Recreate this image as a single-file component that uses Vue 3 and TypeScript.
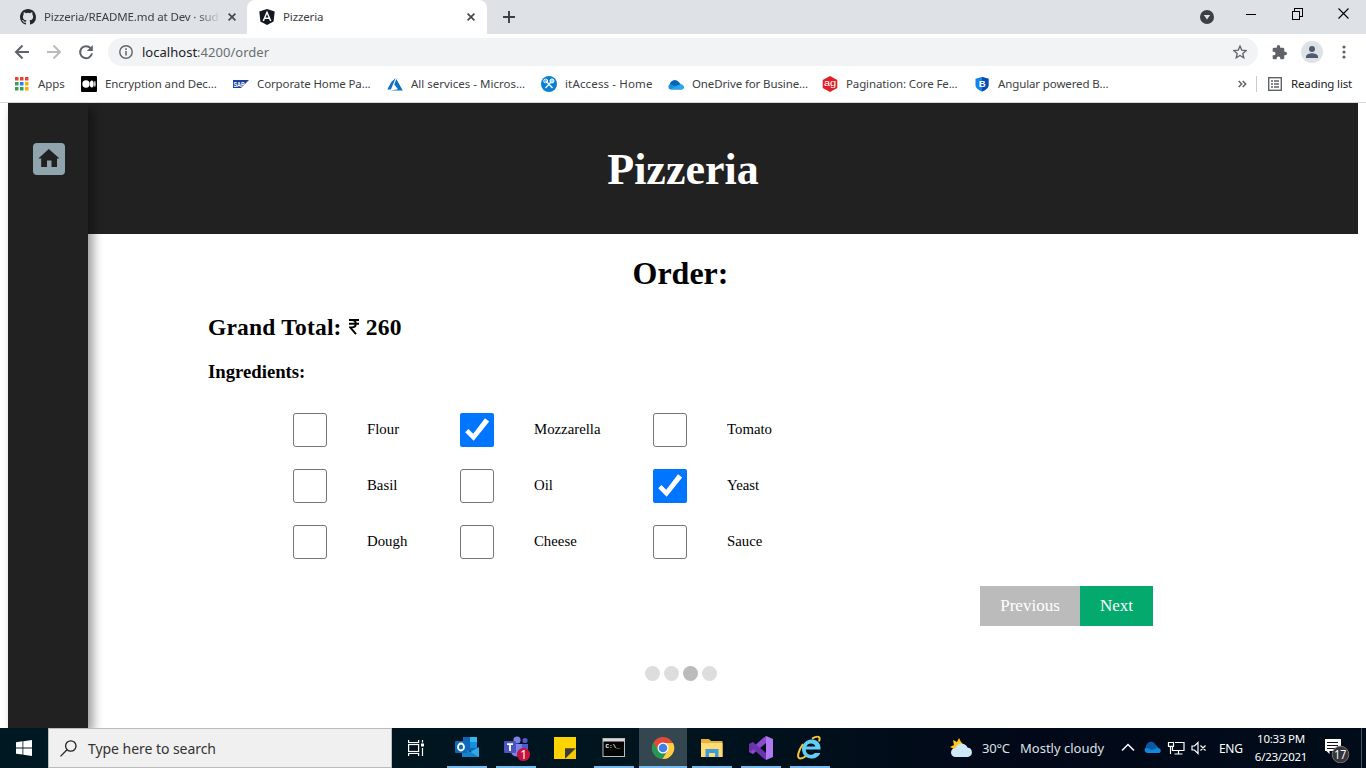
<script setup lang="ts">
import { ref } from 'vue'

interface Bookmark { id: string; label: string }
interface Ingredient { name: string; checked: boolean }

const bookmarks: Bookmark[] = [
  { id: 'medium', label: 'Encryption and Dec...' },
  { id: 'sap', label: 'Corporate Home Pa...' },
  { id: 'azure', label: 'All services - Micros...' },
  { id: 'it', label: 'itAccess - Home' },
  { id: 'onedrive', label: 'OneDrive for Busine...' },
  { id: 'ag', label: 'Pagination: Core Fe...' },
  { id: 'bootstrap', label: 'Angular powered B...' },
]

const ingredients = ref<Ingredient[]>([
  { name: 'Flour', checked: false },
  { name: 'Mozzarella', checked: true },
  { name: 'Tomato', checked: false },
  { name: 'Basil', checked: false },
  { name: 'Oil', checked: false },
  { name: 'Yeast', checked: true },
  { name: 'Dough', checked: false },
  { name: 'Cheese', checked: false },
  { name: 'Sauce', checked: false },
])

const steps = [1, 2, 3, 4]
const currentStep = 3
const total = 260
const tasks = ['outlook', 'teams', 'sticky', 'cmd', 'chrome', 'explorer', 'vs', 'ie']
</script>

<template>
  <div class="screen">
    <div class="tabstrip">
      <div class="tab tab-github">
        <svg class="fav" width="16" height="16" viewBox="0 0 16 16"><path fill="#24292e" d="M8 0C3.58 0 0 3.58 0 8c0 3.54 2.29 6.53 5.47 7.59.4.07.55-.17.55-.38 0-.19-.01-.82-.01-1.49-2.01.37-2.53-.49-2.69-.94-.09-.23-.48-.94-.82-1.13-.28-.15-.68-.52-.01-.53.63-.01 1.08.58 1.23.82.72 1.21 1.87.87 2.33.66.07-.52.28-.87.51-1.07-1.78-.2-3.64-.89-3.64-3.95 0-.87.31-1.59.82-2.15-.08-.2-.36-1.02.08-2.12 0 0 .67-.21 2.2.82a7.6 7.6 0 0 1 4 0c1.53-1.04 2.2-.82 2.2-.82.44 1.1.16 1.92.08 2.12.51.56.82 1.27.82 2.15 0 3.07-1.87 3.75-3.65 3.95.29.25.54.73.54 1.48 0 1.07-.01 1.93-.01 2.2 0 .21.15.46.55.38A8 8 0 0 0 16 8c0-4.42-3.58-8-8-8z"/></svg>
        <span class="tab-title faded">Pizzeria/README.md at Dev · sud</span>
        <svg class="x" width="8" height="8" viewBox="0 0 8 8"><path d="M.6.6l6.8 6.8M7.4.6L.6 7.4" stroke="#45494d" stroke-width="1.7"/></svg>
      </div>
      <div class="tab tab-active">
        <svg class="fav" width="16" height="16" viewBox="0 0 16 16"><path fill="#111820" d="M8 0l7.7 2.5-1.1 10L8 16l-6.600-3.500L.3 2.500z"/><path d="M4.300 12L8 3.300 11.700 12M5.700 9.300h4.600" fill="none" stroke="#fff" stroke-width="1.500"/></svg>
        <span class="tab-title">Pizzeria</span>
        <svg class="x" width="8" height="8" viewBox="0 0 8 8"><path d="M.6.6l6.8 6.8M7.4.6L.6 7.4" stroke="#45494d" stroke-width="1.7"/></svg>
      </div>
      <svg class="plus" width="12" height="12" viewBox="0 0 12 12"><path d="M6 0v12M0 6h12" stroke="#3c4043" stroke-width="1.9"/></svg>
      <svg class="drop" width="14" height="14" viewBox="0 0 14 14"><circle cx="7" cy="7" r="7" fill="#3c4043"/><path d="M3.800 5h6.400L7 9.500z" fill="#dee1e6"/></svg>
      <svg class="winctl" width="104" height="12" viewBox="0 0 104 12" shape-rendering="crispEdges"><path d="M0 6.500h10M46 3.500h7.500v7.500h-7.500zM48.500 3V.500H56.500V8.500H54" fill="none" stroke="#000"/><path d="M92.500 .500l10 10M102.500 .500l-10 10" stroke="#000" stroke-width="1.100" shape-rendering="auto"/></svg>
    </div>

    <div class="toolbar">
      <svg class="nav" width="90" height="16" viewBox="0 0 90 16" fill="none" stroke-width="2">
        <path d="M15 8H2.500M8.500 1.500L2 8 8.500 14.500" stroke="#5f6368"/>
        <path d="M33 8H45.500M39.500 1.500L46 8 39.500 14.500" stroke="#b9bbbe"/>
        <path d="M76.600 4.200A6 6 0 1 0 78 9.400" stroke="#5f6368"/><path d="M78.800 1v6h-6z" fill="#5f6368"/>
      </svg>
      <div class="omnibox">
        <svg width="14" height="14" viewBox="0 0 14 14"><circle cx="7" cy="7" r="6.200" fill="none" stroke="#5f6368" stroke-width="1.400"/><path d="M7 6v4.500M7 3.300v1.600" stroke="#5f6368" stroke-width="1.500"/></svg>
        <span class="url"><b>localhost</b>:4200/order</span>
        <svg class="star" width="14" height="14" viewBox="0 0 14 14"><path d="M7 1l1.700 4.100 4.500.400-3.400 2.900 1 4.400L7 10.500l-3.800 2.300 1-4.400L.8 5.500l4.500-.400z" fill="none" stroke="#5f6368" stroke-width="1.300"/></svg>
      </div>
      <svg class="puzzle" width="15" height="15" viewBox="1 1 22 22"><path fill="#5f6368" d="M20.500 11H19V7a2 2 0 0 0-2-2h-4V3.500a2.500 2.500 0 0 0-5 0V5H4a2 2 0 0 0-2 2v3.800h1.500a2.700 2.700 0 0 1 0 5.400H2V20a2 2 0 0 0 2 2h3.800v-1.500a2.700 2.700 0 0 1 5.400 0V22H17a2 2 0 0 0 2-2v-4h1.500a2.500 2.500 0 0 0 0-5z"/></svg>
      <svg class="avatar" width="22" height="22" viewBox="0 0 22 22"><circle cx="11" cy="11" r="11" fill="#dee1e6"/><circle cx="11" cy="8" r="3" fill="#4f5b70"/><path d="M5 17v-1.500c0-2 4-3.200 6-3.200s6 1.200 6 3.200V17z" fill="#4f5b70"/></svg>
      <svg class="dots" width="4" height="14" viewBox="0 0 4 14" fill="#5f6368"><circle cx="2" cy="2" r="1.600"/><circle cx="2" cy="7" r="1.600"/><circle cx="2" cy="12" r="1.600"/></svg>
    </div>

    <div class="bookmarks">
      <div class="bm bm-apps">
        <svg width="14" height="14" viewBox="0 0 14 14"><path fill="#ea4335" d="M0 0h3.500v3.500H0zM5 0h3.500v3.500H5zM10 0h3.500v3.500H10z"/><path fill="#34a053" d="M0 5h3.500v3.500H0zM0 10h3.500v3.500H0zM5 10h3.500v3.500H5z"/><path fill="#1a88f0" d="M5 5h3.500v3.500H5z"/><path fill="#f9ab00" d="M10 5h3.500v3.500H10zM10 10h3.500v3.500H10z"/></svg>
        <span>Apps</span>
      </div>
      <div v-for="b in bookmarks" :key="b.id" class="bm" :class="'bm-' + b.id">
        <svg width="16" height="16" viewBox="0 0 16 16">
          <template v-if="b.id === 'medium'"><rect width="16" height="16" rx="1" fill="#000"/><circle cx="5" cy="8" r="3.700" fill="#fff"/><ellipse cx="10.800" cy="8" rx="1.900" ry="3.500" fill="#fff"/><ellipse cx="13.900" cy="8" rx=".7" ry="3.200" fill="#fff"/></template>
          <template v-else-if="b.id === 'sap'"><path d="M0 4h16l-8 8H0z" fill="#1b3f9c"/><text x=".5" y="10.500" font-size="7" font-weight="700" textLength="11" lengthAdjust="spacingAndGlyphs" font-family="Liberation Sans" fill="#fff">SAP</text></template>
          <template v-else-if="b.id === 'azure'"><path d="M8.700 2L4.300 6.100.3 13.500h3.600zM9.300 3l-2 5.500 3.700 4.700-7.200 1.200H15.800z" fill="#0b70c6"/></template>
          <template v-else-if="b.id === 'it'"><circle cx="8" cy="8" r="8" fill="#087fd2"/><path d="M4.500 12l7-7.500M4.500 4.500l7 7.500" stroke="#e8f7ff" stroke-width="1.500"/><circle cx="4.700" cy="5" r="1.900" fill="none" stroke="#fff"/><circle cx="11" cy="4.900" r="2" fill="#9bd7fa" stroke="#fff"/></template>
          <template v-else-if="b.id === 'onedrive'"><path d="M2.500 13.500A3 3 0 0 1 2 8a5 5 0 0 1 8.500-2A4 4 0 0 1 13 9a2.500 2.500 0 0 1 1 4.500z" fill="#1490df"/><path d="M2 8a5 5 0 0 1 9-1.500l1 2L8 10.500z" fill="#0364b8"/><path d="M8 10l4-1.500a3 3 0 0 1 4 3 2.300 2.300 0 0 1-2 2H3z" fill="#28a8ea"/></template>
          <template v-else-if="b.id === 'ag'"><path d="M8 0l7.300 4v8L8 16 .7 12V4z" fill="#e01f27"/><text x="2" y="10.300" font-size="9" font-family="Liberation Sans" textLength="12" lengthAdjust="spacingAndGlyphs" fill="#fff">ag</text></template>
          <template v-else><path d="M8 1l6.500 1.700v6.500c0 3-3.500 5-6.500 6.300-3-1.300-6.500-3.300-6.500-6.300V2.700z" fill="#1583e8"/><path d="M8 1l6.500 1.700v6.500c0 3-3.500 5-6.500 6.300z" fill="#084cb5"/><text x="4.700" y="11.400" font-size="9.500" font-weight="700" font-family="Liberation Sans" fill="#fff">B</text></template>
        </svg>
        <span>{{ b.label }}</span>
      </div>
      <svg class="more" width="9" height="8" viewBox="0 0 9 8"><path d="M.7 1l3 3-3 3M4.700 1l3 3-3 3" fill="none" stroke="#5f6368" stroke-width="1.500"/></svg>
      <div class="divider"></div>
      <svg class="listicon" width="14" height="14" viewBox="0 0 14 14" fill="none" stroke="#5f6368"><rect x=".7" y=".7" width="12.600" height="12.600" stroke-width="1.400"/><path d="M3 4h2M3 7h2M3 10h2M6 4h5M6 7h5M6 10h5" stroke-width="1.500"/></svg>
      <span class="reading">Reading list</span>
    </div>

    <div class="page">
      <header class="hero"><h1>Pizzeria</h1></header>
      <aside class="sidebar">
        <div class="home">
          <svg width="32" height="32" viewBox="0 0 32 32"><path fill="#212121" d="M15.800 6L26.500 15.500H24v8.500H18.500v-6.500h-4.500v6.500H8.200v-8.500H5.300z"/></svg>
        </div>
      </aside>
      <main class="content">
        <h1 class="title">Order:</h1>
        <h2>Grand Total: <svg class="rupee" width="10" height="16" viewBox="0 0 10 16" role="img" aria-label="₹"><path d="M0 1h10M0 4.800h10M.3 1h2.700c5 0 5 7.400 0 7.400H1.200l5.800 6.800" fill="none" stroke="#000" stroke-width="1.900"/></svg> {{ total }}</h2>
        <h3>Ingredients:</h3>
        <div class="grid">
          <label v-for="i in ingredients" :key="i.name" class="ingredient">
            <span class="box" :class="{ on: i.checked }" @click="i.checked = !i.checked">
              <svg v-if="i.checked" width="34" height="34" viewBox="0 0 34 34"><path fill="#fff" d="M5.200 19.300l3.200-3.200 4.800 4.700L25 5.200l4.200 3.200L13.700 27.800z"/></svg>
            </span>
            <span>{{ i.name }}</span>
          </label>
        </div>
        <div class="actions"><button class="prev">Previous</button><button class="next">Next</button></div>
        <div class="steps"><i v-for="s in steps" :key="s" :class="{ active: s === currentStep }"></i></div>
      </main>
    </div>

    <footer class="taskbar">
      <div class="start"><svg width="16" height="16" viewBox="0 0 16 16" fill="#fff"><path d="M0 2.200l6.500-.9v6.200H0zM7.300 1.200L16 0v7.500H7.300zM0 8.400h6.500v6.200L0 13.700zM7.300 8.400H16V16l-8.700-1.200z"/></svg></div>
      <div class="search">
        <svg width="17" height="17" viewBox="0 0 17 17" fill="none" stroke="#222" stroke-width="1.300"><circle cx="10.800" cy="6" r="5.200"/><path d="M7 9.700L.5 16.400"/></svg>
        <span>Type here to search</span>
      </div>
      <div class="taskview"><svg width="17" height="16" viewBox="0 0 17 16" fill="none" stroke="#fff" stroke-width="1.200"><rect x=".6" y="4.500" width="10" height="7"/><path d="M.6 0v2.500h10V0M.6 16v-2.500h10V16M14.500 0v2.500M14.500 8v8"/><path d="M13 3.500h3v3h-3z" fill="#fff" stroke="none"/></svg></div>
      <div class="tasks">
        <div v-for="t in tasks" :key="t" class="task" :class="t">
          <svg width="28" height="28" viewBox="0 0 28 28">
            <template v-if="t === 'outlook'"><path d="M9 3h14v14H9z" fill="#1066b5"/><path d="M16 3h7v5h-7z" fill="#35b8f1"/><path d="M16 8h7v6h-7z" fill="#1490df"/><path d="M8 13l8 5 9-5v10H8z" fill="#32a9e7"/><path d="M8 13l17 10H8z" fill="#1682cd"/><rect x="1" y="7" width="12" height="12" rx="1" fill="#0f6cbd"/><ellipse cx="7" cy="13" rx="3" ry="3.500" fill="none" stroke="#fff" stroke-width="1.800"/></template>
            <template v-else-if="t === 'teams'"><circle cx="14" cy="6" r="3.600" fill="#7b83eb"/><circle cx="22" cy="6.500" r="2.600" fill="#5059c9"/><path d="M17 10h8v6c0 4-5 5-8 2z" fill="#5059c9"/><path d="M8 10h11v8c0 6-10 6-11 0z" fill="#7b83eb"/><rect x="1" y="7" width="12" height="12" rx="1" fill="#4b53bc"/><path d="M4 10.200h6M7 10.200V17" stroke="#fff" stroke-width="1.800"/><circle cx="20.500" cy="20.500" r="6.600" fill="#c4123b"/><text x="17.200" y="25" font-family="Noto Sans" font-size="12" fill="#fff">1</text></template>
            <template v-else-if="t === 'sticky'"><path d="M3 3h22v11.500L14.500 25H3z" fill="#fdd300"/><path d="M14 14.200h11L14 25z" fill="#3d3b38"/><path d="M25 14.200V25H14z" fill="#f6c900"/></template>
            <template v-else-if="t === 'cmd'"><rect x="3" y="4.500" width="21.500" height="18" fill="#050505" stroke="#bcbcbc"/><path d="M3 5h21.500v2.500H3z" fill="#d9d9d9"/><text x="5.500" y="14" font-family="Liberation Mono" font-weight="700" font-size="6" fill="#fff">C:\_</text></template>
            <template v-else-if="t === 'chrome'"><circle cx="14" cy="14" r="11" fill="#e04a3a"/><path d="M4.500 8.500A11 11 0 0 0 13.500 25l5.200-8.500L14 14l-4.700 2.500z" fill="#219b54"/><path d="M24 9H14v5l4.700 2.500L13.500 25A11 11 0 0 0 24 9z" fill="#ffce44"/><circle cx="14" cy="14" r="5.500" fill="#fff"/><circle cx="14" cy="14" r="4.300" fill="#3d80ea"/></template>
            <template v-else-if="t === 'explorer'"><path d="M3 5h8l2 2h11.500v16H3z" fill="#e9b03b"/><path d="M3 9h21.500v14H3z" fill="#ffdc72"/><path d="M7.500 23v-8h13v8h-3.500v-4h-6v4z" fill="#3c9bdd"/></template>
            <template v-else-if="t === 'vs'"><path d="M19 2l7 3v18l-7 3z" fill="#b179f1"/><path d="M19 2v7L6 20l-4-2v-1L15.500 4.500z" fill="#8b4bd0"/><path d="M19 26v-7L6 8 2 10v1l13.500 12.500z" fill="#6c34ac"/><path d="M2 10l4 2v4l-4 2z" fill="#6932a5"/></template>
            <template v-else><path d="M9 15.500h15.500C25 8 20 5.500 15.500 5.500S6 9.500 6 15s4 9.500 9.500 9.500c4 0 7.500-2 8.700-5.500h-5.400c-2.700 3.300-9 2-9-3.500z" fill="#62cef7"/><path d="M10.500 12.500c.5-4 8.500-4 8.800 0z" fill="#03121c"/><path d="M23 7.500c2-5-1-6.500-7-2.800M7 10C2 17 .5 24 4 24.500c2 .200 4-1 6-2.500" stroke="#f6c52f" stroke-width="2" fill="none"/></template>
          </svg>
        </div>
      </div>
      <div class="weather">
        <svg width="23" height="20" viewBox="0 0 23 20"><path d="M9 0l2 4 4 4-4 7H3l1-4-4-2 4-2-1-5 4 2z" fill="#ffc91b"/><path d="M5.500 19a4.500 4.500 0 0 1 0-9 6.500 6.500 0 0 1 12-.500A4.800 4.800 0 0 1 18 19z" fill="#cfe8f8"/></svg>
        <span class="temp">30°C</span><span class="cond">Mostly cloudy</span>
      </div>
      <svg class="tray" width="87" height="16" viewBox="0 0 87 16" fill="none" stroke="#fff" stroke-width="1.200">
        <path d="M1 10.500L7 4.500l6 6" stroke-width="1.500"/>
        <path d="M26 13a3 3 0 0 1-1-5.500 6 6 0 0 1 9-2.500 4 4 0 0 1 3 3 2.700 2.700 0 0 1 1.500 5z" fill="#1286d8" stroke="none"/><path d="M25 7.500a5 5 0 0 1 10-1.500l1 2-5 2z" fill="#0759a5" stroke="none"/>
        <path d="M54 2.500h9v8H51.500V7M57.500 10.500v3.500M53.500 14h8M47.500 2.500h5v3.800h-5zM49.500 6.300V14"/>
        <path d="M71 6h2.500l3.500-3.500v11L73.500 10H71zM79.500 5.500l5 5M84.500 5.500l-5 5"/>
      </svg>
      <span class="lang">ENG</span>
      <div class="clock"><span>10:33 PM</span><span class="date">6/23/2021</span></div>
      <svg class="notif" width="26" height="24" viewBox="0 0 26 24"><path d="M1 0h16v12H5.500V15L2.500 12H1z" fill="#fff"/><path d="M3 3.500h11M3 6.500h11M3 9.500h8" stroke="#10141d"/><circle cx="16.500" cy="15.500" r="8.300" fill="#35363b" stroke="#777" /><text x="10.300" y="19.800" font-family="Noto Sans" font-size="12" textLength="12" lengthAdjust="spacingAndGlyphs" fill="#fff">17</text></svg>
      <div class="peek"></div>
    </footer>
  </div>
</template>

<style>
html, body { margin: 0; overflow: hidden; }
</style>

<style scoped>
* { box-sizing: border-box; }
.screen { width: 1366px; height: 768px; display: flex; flex-direction: column; background: #fff; overflow: hidden; font-family: "Noto Sans", "Open Sans", sans-serif; color: #3c4043; font-size: 12px; }
svg { flex: none; display: block; }
span { white-space: nowrap; }
.tabstrip { height: 34px; background: #dee1e6; display: flex; align-items: center; flex: none; }
.tab { height: 34px; display: flex; align-items: center; }
.tab-github { width: 247px; padding-left: 20px; background: #dee1e6; border-radius: 0 0 8px 0; }
.tab-active { width: 240px; padding-left: 12px; background: #fff; border-radius: 8px 8px 0 0; }
.tab-title { margin: -2px 0 0 8px; width: 176px; overflow: hidden; font-size: 11.5px; letter-spacing: -.13px; }
.tab-active .tab-title { width: 174px; }
.faded { -webkit-mask-image: linear-gradient(90deg, #000 153px, transparent 177px); mask-image: linear-gradient(90deg, #000 153px, transparent 177px); }
.x { margin-left: 8px; }
.tab-active .x { margin-left: 10px; }
.plus { margin-left: 16px; }
.drop { margin-left: 685px; }
.winctl { margin-left: 32px; align-self: flex-start; margin-top: 8px; }
.toolbar { height: 34px; display: flex; align-items: center; flex: none; padding-top: 2px; }
.nav { margin-left: 14px; }
.omnibox { margin-left: 4px; width: 1150px; height: 28px; border-radius: 14px; background: #f1f3f4; display: flex; align-items: center; padding: 0 11px; }
.url { margin-left: 9px; font-size: 13px; color: #6a6e73; flex: 1; letter-spacing: .02px; }
.url b { color: #202124; font-weight: 400; }
.puzzle { margin-left: 14px; }
.avatar { margin-left: 14px; }
.dots { margin-left: 19px; }
.bookmarks { height: 35px; flex: none; display: flex; align-items: center; border-bottom: 1px solid #d6d8da; padding: 0 0 3px 15px; }
.bm { display: flex; align-items: center; font-size: 11.5px; letter-spacing: -.12px; }
.bm span { margin: -1px 0 0 8px; }
.bm.bm-apps span { margin-left: 9px; }
.bm-apps { width: 66px; } .bm-medium { width: 152px; } .bm-sap { width: 154px; } .bm-azure { width: 154px; letter-spacing: 0; } .bm-it { width: 127px; letter-spacing: .15px; } .bm-onedrive { width: 154px; } .bm-ag { width: 152px; } .bm-bootstrap { width: 264px; }
.more { width: 9px; }
.divider { width: 1px; height: 16px; margin-left: 9px; background: #c9ccd0; }
.listicon { margin-left: 11px; }
.reading { margin: -1px 0 0 9px; font-size: 11.5px; letter-spacing: -.15px; color: #202124; }

.page { height: 625px; flex: none; overflow: hidden; padding: 0 8px; font-family: "Liberation Serif", serif; color: #000; display: grid; grid-template-columns: 80px 1270px; grid-template-rows: 131px 494px; }
.hero { grid-column: 1 / 3; grid-row: 1; background: #212121; color: #fff; display: flex; align-items: center; justify-content: center; }
.hero h1 { margin: 2px 0 0; font-size: 44px; }
.sidebar { grid-column: 1; grid-row: 1 / 3; background: #212121; box-shadow: 5px 5px 10px rgba(0, 0, 0, .4); padding: 40px 0 0 25px; z-index: 1; }
.home { width: 32px; height: 32px; background: #90a4ae; border-radius: 4px; }
.content { grid-column: 2; grid-row: 2; padding: 0 205px 0 120px; display: flex; flex-direction: column; }
.title { margin: 21px 0 0; font-size: 32px; line-height: 37px; text-align: center; }
h2 { margin: 22px 0 0; font-size: 23.5px; line-height: 27px; letter-spacing: .2px; }
.rupee { display: inline-block; vertical-align: 0; margin: 0 1px; }
h3 { margin: 20px 0 0; font-size: 18.72px; line-height: 21px; letter-spacing: 0; }
.grid { margin: 31px 0 0 85px; display: grid; grid-template-columns: 167px 193px 150px; grid-auto-rows: 34px; row-gap: 22px; font-size: 14.8px; }
.ingredient { display: flex; gap: 40px; align-items: center; }
.ingredient > span:last-child { margin-top: -2px; }
.box { width: 34px; height: 34px; border: 1px solid #767676; border-radius: 3px; }
.box.on { border: 0; background: #0075ff; border-radius: 2px; }
.actions { margin-top: 27px; display: flex; justify-content: flex-end; }
button { border: 0; padding: 0; height: 40px; font-family: "Liberation Serif", serif; font-size: 17px; color: #fff; }
.prev { width: 100px; background: #bbb; }
.next { width: 73px; background: #04aa6d; }
.steps { margin: 40px 0 0 437px; display: flex; gap: 4px; }
.steps i { width: 15px; height: 15px; border-radius: 50%; background: #ddd; }
.steps .active { background: #bbb; }

.taskbar { height: 40px; flex: none; display: flex; align-items: center; background: linear-gradient(90deg, #001821, #00141e 50%, #020817 75%, #000c19); color: #fff; }
.start { width: 48px; padding-left: 16px; }
.search { width: 344px; height: 40px; background: #f0f0f0; border: 1px solid #b9bcbd; display: flex; align-items: center; padding-left: 11px; color: #333; font-size: 14px; }
.search span { margin-left: 11px; letter-spacing: -.05px; }
.taskview { width: 50px; padding-left: 16px; }
.tasks { display: flex; height: 40px; }
.task { width: 49px; height: 40px; padding: 6px 0 0 11px; background: linear-gradient(#76b9ed, #76b9ed) 5px 38px / 40px 2px no-repeat; }
.task.outlook, .task.teams { padding-left: 12px; }
.task.sticky { background: none; }
.task.chrome { background: linear-gradient(#76b9ed, #76b9ed) 1px 38px / 48px 2px no-repeat, linear-gradient(#34464f, #34464f) 1px 0 / 48px 38px no-repeat; }
.weather { display: flex; align-items: center; margin-left: 116px; width: 172px; font-size: 13px; color: #dce1e5; }
.temp { margin-left: 9px; width: 38px; letter-spacing: -.2px; }
.cond { letter-spacing: 0; }
.tray { margin-left: -1px; }
.lang { margin-left: 11px; width: 25px; font-size: 12px; letter-spacing: -.3px; }
.clock { margin-left: 7px; width: 60px; display: flex; flex-direction: column; align-items: center; font-size: 11.5px; line-height: 18px; letter-spacing: -.25px; }
.notif { margin-left: 13px; margin-top: 5px; }
.peek { margin-left: 11px; width: 1px; height: 40px; background: #4a525d; }
</style>
